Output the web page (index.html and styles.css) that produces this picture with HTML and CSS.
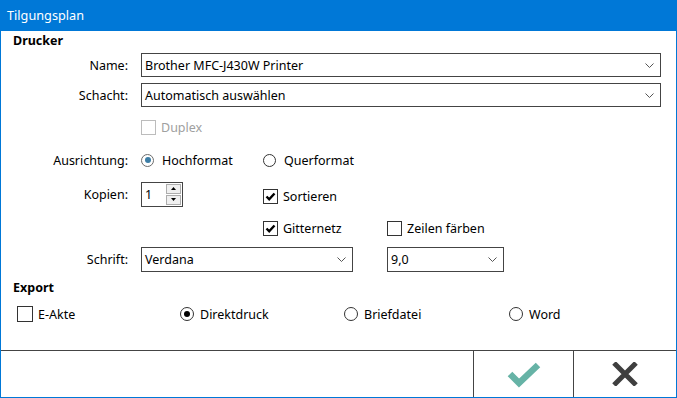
FILE: index.html
```html
<!DOCTYPE html>
<html lang="de">
<head>
<meta charset="utf-8">
<title>Tilgungsplan</title>
<link rel="stylesheet" href="styles.css">
</head>
<body>
<div class="window">
  <div class="titlebar">Tilgungsplan</div>
  <div class="body">
    <div class="section">Drucker</div>
    <div class="form">
      <div class="label r1">Name:</div>
      <div class="combo wide r1">
        <span>Brother MFC-J430W Printer</span>
        <svg class="chev" width="9" height="5" viewBox="0 0 9 5"><polyline points="0.5,0.5 4.5,4.5 8.5,0.5" fill="none" stroke="#555" stroke-width="1"/></svg>
      </div>

      <div class="label r2">Schacht:</div>
      <div class="combo wide r2">
        <span>Automatisch auswählen</span>
        <svg class="chev" width="9" height="5" viewBox="0 0 9 5"><polyline points="0.5,0.5 4.5,4.5 8.5,0.5" fill="none" stroke="#555" stroke-width="1"/></svg>
      </div>

      <div class="check disabled c2 r3"><span class="box"></span>Duplex</div>

      <div class="label r4">Ausrichtung:</div>
      <div class="radio c2 r4"><span class="circle checked blue"></span>Hochformat</div>
      <div class="radio c3 r4"><span class="circle"></span>Querformat</div>

      <div class="label r5">Kopien:</div>
      <div class="spin c2 r5">
        <span class="val">1</span>
        <div class="spinbtns">
          <span class="sbtn"><svg width="5" height="3" viewBox="0 0 5 3"><polygon points="2.5,0 5,3 0,3" fill="#000"/></svg></span>
          <span class="sbtn"><svg width="5" height="3" viewBox="0 0 5 3"><polygon points="0,0 5,0 2.5,3" fill="#000"/></svg></span>
        </div>
      </div>
      <div class="check c3 r5 low"><span class="box"><svg width="11" height="11" viewBox="0 0 11 11"><polyline points="1.5,5.5 4.2,8.3 9.5,2.5" fill="none" stroke="#000" stroke-width="2.4"/></svg></span>Sortieren</div>

      <div class="check c3 r6"><span class="box"><svg width="11" height="11" viewBox="0 0 11 11"><polyline points="1.5,5.5 4.2,8.3 9.5,2.5" fill="none" stroke="#000" stroke-width="2.4"/></svg></span>Gitternetz</div>
      <div class="check c4 r6"><span class="box"></span>Zeilen färben</div>

      <div class="label r7">Schrift:</div>
      <div class="combo font r7">
        <span>Verdana</span>
        <svg class="chev" width="9" height="5" viewBox="0 0 9 5"><polyline points="0.5,0.5 4.5,4.5 8.5,0.5" fill="none" stroke="#555" stroke-width="1"/></svg>
      </div>
      <div class="combo size r7">
        <span>9,0</span>
        <svg class="chev" width="9" height="5" viewBox="0 0 9 5"><polyline points="0.5,0.5 4.5,4.5 8.5,0.5" fill="none" stroke="#555" stroke-width="1"/></svg>
      </div>
    </div>

    <div class="section export-title">Export</div>
    <div class="export">
      <div class="check e1"><span class="box dark"></span>E-Akte</div>
      <div class="radio e2"><span class="circle checked dark"></span>Direktdruck</div>
      <div class="radio e3"><span class="circle"></span>Briefdatei</div>
      <div class="radio e4"><span class="circle"></span>Word</div>
    </div>

    <div class="spacer"></div>

    <div class="buttonbar">
      <div class="bb-empty"></div>
      <div class="bb-btn">
        <svg width="34" height="27" viewBox="0 0 34 27"><polyline points="3,13 12,22 31,4" fill="none" stroke="#66b3a6" stroke-width="6.5"/></svg>
      </div>
      <div class="bb-btn">
        <svg width="26" height="24" viewBox="0 0 26 24"><path d="M2,1 L24,23 M24,1 L2,23" fill="none" stroke="#3f3f3f" stroke-width="5"/></svg>
      </div>
    </div>
  </div>
</div>
</body>
</html>
```

FILE: styles.css
```css
* { box-sizing: border-box; }
html, body { margin: 0; padding: 0; background: #fff; }
body {
  font-family: "Noto Sans", "Open Sans", sans-serif;
  font-size: 12.5px;
  color: #000;
}
.window {
  width: 677px;
  height: 398px;
  display: flex;
  flex-direction: column;
}
.titlebar {
  height: 31px;
  background: #0078d7;
  color: #fff;
  font-size: 12.7px;
  line-height: 31px;
  padding-left: 7px;
  flex: none;
}
.body {
  flex: 1;
  display: flex;
  flex-direction: column;
  border: 1px solid #0078d7;
  border-top: none;
}
.section {
  font-weight: bold;
  height: 20px;
  line-height: 20px;
  padding-left: 12px;
  flex: none;
}
.form {
  margin-top: 2px;
  display: grid;
  grid-template-columns: 127px 135px 124px 1fr;
  grid-template-rows: 24px 24px 28px 26px 30px 26px 25px;
  row-gap: 6px;
  column-gap: 0;
  padding-right: 15px;
  flex: none;
}
.r1 { grid-row: 1; } .r2 { grid-row: 2; } .r3 { grid-row: 3; }
.r4 { grid-row: 4; } .r5 { grid-row: 5; } .r6 { grid-row: 6; } .r7 { grid-row: 7; }
.c2 { grid-column: 2; } .c3 { grid-column: 3; } .c4 { grid-column: 4; }

.label {
  grid-column: 1;
  display: flex;
  align-items: center;
  justify-content: flex-end;
}
.form > .c2, .form > .combo { margin-left: 13px; }

.combo {
  border: 1px solid #444;
  display: flex;
  align-items: center;
  justify-content: space-between;
  padding: 0 6px 0 3px;
  height: 100%;
}
.combo.wide { grid-column: 2 / 5; }
.combo.font { grid-column: 2 / 4; margin-right: 34px; }
.combo.size { grid-column: 4; width: 117px; margin-left: 0; }
.chev { flex: none; }

.check, .radio {
  display: flex;
  align-items: center;
  white-space: nowrap;
}
.check .box {
  width: 15px;
  height: 15px;
  border: 1px solid #333;
  margin-right: 5px;
  display: flex;
  align-items: center;
  justify-content: center;
  flex: none;
}
.check.low { padding-top: 5px; }
.check.disabled { color: #a0a0a0; }
.check.disabled .box { border-color: #bcbcbc; }

.radio .circle {
  width: 13px;
  height: 13px;
  border: 1px solid #333;
  border-radius: 50%;
  margin-right: 8px;
  flex: none;
  display: flex;
  align-items: center;
  justify-content: center;
}
.radio .circle.checked::after {
  content: "";
  width: 6px;
  height: 6px;
  border-radius: 50%;
  background: #000;
}
.radio .circle.blue { border-color: #6b6b6b; }
.radio .circle.blue::after { background: #3d7ea6; }

.spin {
  width: 42px;
  height: 25px;
  align-self: center;
  border: 1px solid #444;
  display: flex;
  align-items: center;
  justify-content: space-between;
  padding: 0 1px 0 3px;
}
.spinbtns {
  display: flex;
  flex-direction: column;
  gap: 1px;
}
.sbtn {
  width: 15px;
  height: 10px;
  border: 1px solid #adadad;
  background: #f0f0f0;
  display: flex;
  align-items: center;
  justify-content: center;
}

.export-title { margin-top: 6px; }
.export {
  height: 24px;
  margin-top: 4px;
  display: grid;
  grid-template-columns: 163px 164px 165px 1fr;
  padding-left: 16px;
  flex: none;
}
.export .box.dark { border-color: #333; }
.export .radio .circle { margin-right: 6px; width: 14px; height: 14px; }
.export .check .box { width: 16px; height: 16px; }

.spacer { flex: 1; }

.buttonbar {
  height: 47px;
  border-top: 1px solid #444;
  display: flex;
  flex: none;
}
.bb-empty { width: 473px; border-right: 1px solid #444; }
.bb-btn {
  width: 100px;
  border-right: 1px solid #444;
  display: flex;
  align-items: center;
  justify-content: center;
}
.bb-btn:last-child { border-right: none; flex: 1; }
```
